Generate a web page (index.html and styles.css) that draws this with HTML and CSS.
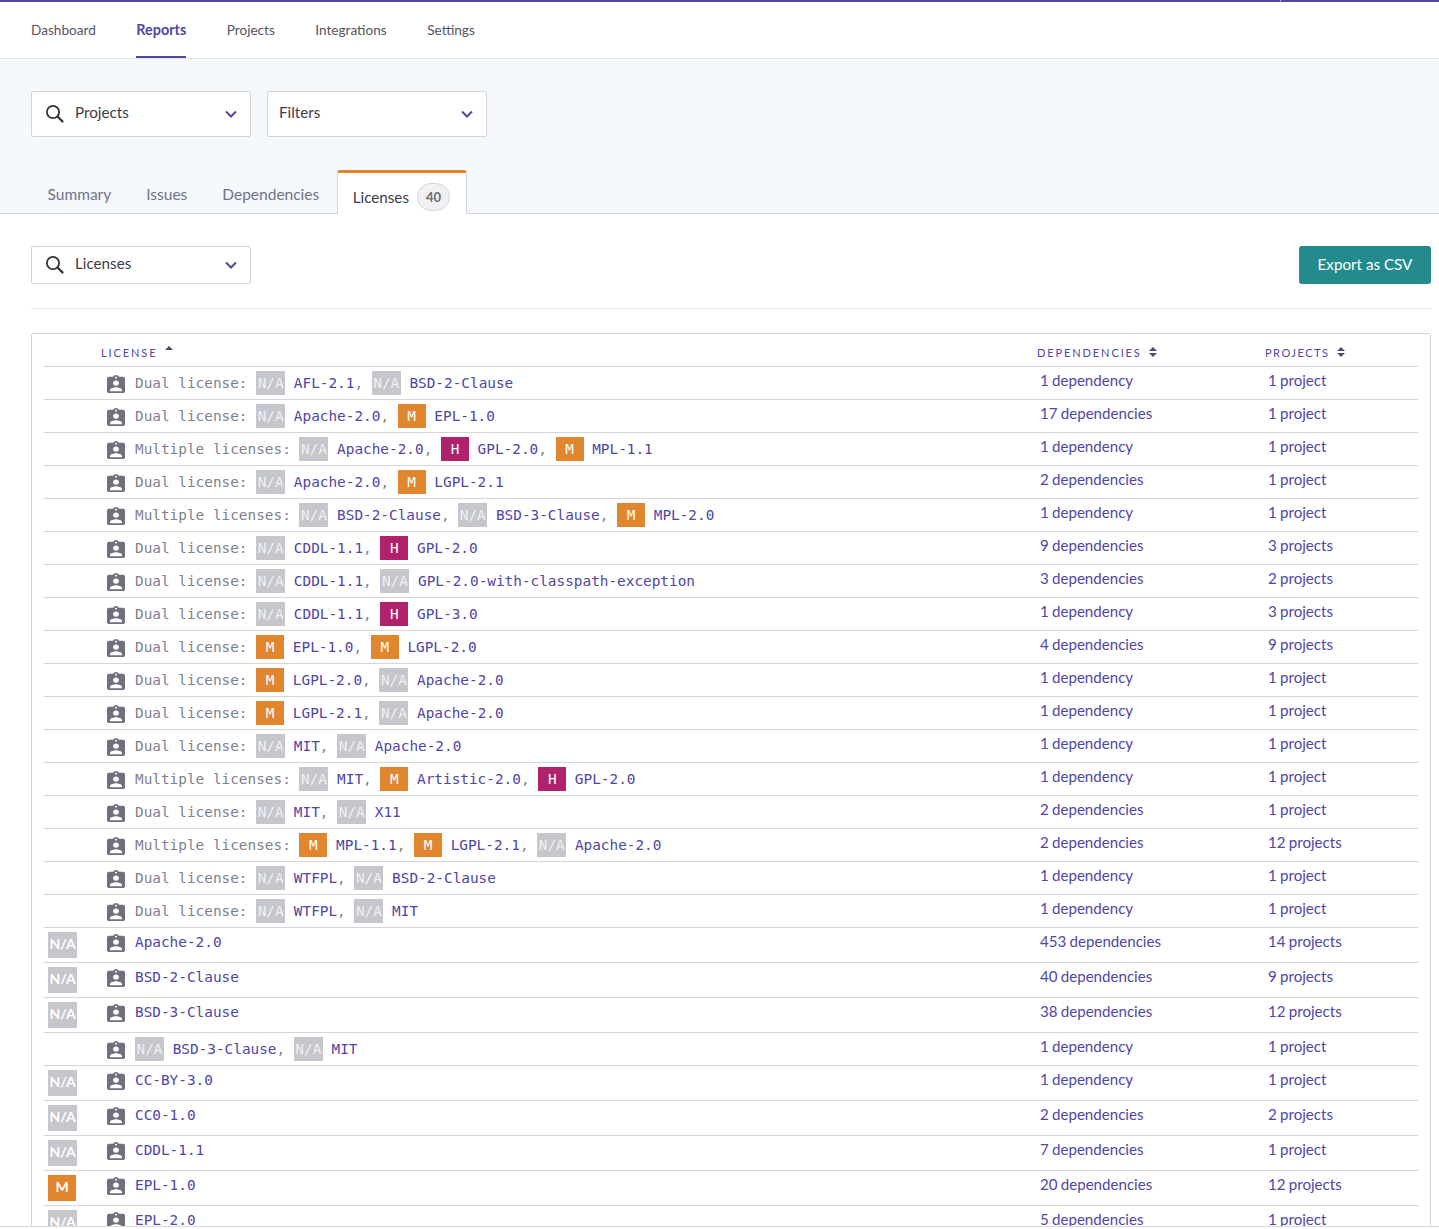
FILE: index.html
```html
<!DOCTYPE html>
<html lang="en">
<head>
    <meta charset="UTF-8">
    <title>Reports - Licenses</title>
    <link rel="stylesheet" href="styles.css">
</head>
<body>
<svg class="defs" width="0" height="0">
    <symbol id="ic-lic" viewBox="3 1 18 20" preserveAspectRatio="none"><path d="M19 3h-4.18C14.4 1.84 13.3 1 12 1c-1.3 0-2.4.84-2.82 2H5c-1.1 0-2 .9-2 2v14c0 1.1.9 2 2 2h14c1.1 0 2-.9 2-2V5c0-1.1-.9-2-2-2zm-7 0c.55 0 1 .45 1 1s-.45 1-1 1-1-.45-1-1 .45-1 1-1zm0 4c1.66 0 3 1.34 3 3s-1.34 3-3 3-3-1.34-3-3 1.34-3 3-3zm6 12H6v-1.4c0-2 4-3.1 6-3.1s6 1.1 6 3.1V19z"/></symbol>
    <symbol id="ic-search" viewBox="1 1 18 18"><circle cx="8" cy="8" r="6.1" fill="none" stroke="currentColor" stroke-width="1.8"/><path d="M12.5 12.5l5.6 5.6" fill="none" stroke="currentColor" stroke-width="2.2"/></symbol>
    <symbol id="ic-chev" viewBox="0 0 12 8"><path d="M1 1.5l5 5 5-5" fill="none" stroke="currentColor" stroke-width="2"/></symbol>
    <symbol id="ic-sort" viewBox="0 0 8 10"><path d="M4 0l4 4H0zM0 6h8l-4 4z"/></symbol>
    <symbol id="ic-up" viewBox="0 0 8 4"><path d="M4 0l4 4H0z"/></symbol>
</svg>
<div class="page">
    <div class="topbar"></div>
    <nav class="nav">
        <a href="#">Dashboard</a>
        <a href="#" class="active">Reports</a>
        <a href="#">Projects</a>
        <a href="#">Integrations</a>
        <a href="#">Settings</a>
    </nav>

    <div class="band">
        <div class="filters">
            <div class="select tall">
                <svg class="search"><use href="#ic-search"/></svg>
                <span class="select-label">Projects</span>
                <svg class="chev"><use href="#ic-chev"/></svg>
            </div>
            <div class="select tall plain">
                <span class="select-label">Filters</span>
                <svg class="chev"><use href="#ic-chev"/></svg>
            </div>
        </div>
        <div class="tabs">
            <a href="#" class="tab">Summary</a>
            <a href="#" class="tab">Issues</a>
            <a href="#" class="tab">Dependencies</a>
            <a href="#" class="tab current">Licenses <span class="count">40</span></a>
        </div>
    </div>

    <div class="content">
        <div class="toolbar">
            <div class="select">
                <svg class="search"><use href="#ic-search"/></svg>
                <span class="select-label">Licenses</span>
                <svg class="chev"><use href="#ic-chev"/></svg>
            </div>
            <button class="export">Export as CSV</button>
        </div>

        <div class="box">
            <div class="head">
                <span></span>
                <span class="th">LICENSE <svg class="sort-up"><use href="#ic-up"/></svg></span>
                <span class="th">DEPENDENCIES <svg class="sort"><use href="#ic-sort"/></svg></span>
                <span class="th">PROJECTS <svg class="sort"><use href="#ic-sort"/></svg></span>
            </div>

            <div class="row"><span></span><div class="lic"><svg class="icon"><use href="#ic-lic"/></svg><div class="combo"><i>Dual license:</i> <b class="na">N/A</b> <a href="#">AFL-2.1</a><i>,</i> <b class="na">N/A</b> <a href="#">BSD-2-Clause</a></div></div><a href="#" class="num">1 dependency</a><a href="#" class="num">1 project</a></div>
            <div class="row"><span></span><div class="lic"><svg class="icon"><use href="#ic-lic"/></svg><div class="combo"><i>Dual license:</i> <b class="na">N/A</b> <a href="#">Apache-2.0</a><i>,</i> <b class="med">M</b> <a href="#">EPL-1.0</a></div></div><a href="#" class="num">17 dependencies</a><a href="#" class="num">1 project</a></div>
            <div class="row"><span></span><div class="lic"><svg class="icon"><use href="#ic-lic"/></svg><div class="combo"><i>Multiple licenses:</i> <b class="na">N/A</b> <a href="#">Apache-2.0</a><i>,</i> <b class="high">H</b> <a href="#">GPL-2.0</a><i>,</i> <b class="med">M</b> <a href="#">MPL-1.1</a></div></div><a href="#" class="num">1 dependency</a><a href="#" class="num">1 project</a></div>
            <div class="row"><span></span><div class="lic"><svg class="icon"><use href="#ic-lic"/></svg><div class="combo"><i>Dual license:</i> <b class="na">N/A</b> <a href="#">Apache-2.0</a><i>,</i> <b class="med">M</b> <a href="#">LGPL-2.1</a></div></div><a href="#" class="num">2 dependencies</a><a href="#" class="num">1 project</a></div>
            <div class="row"><span></span><div class="lic"><svg class="icon"><use href="#ic-lic"/></svg><div class="combo"><i>Multiple licenses:</i> <b class="na">N/A</b> <a href="#">BSD-2-Clause</a><i>,</i> <b class="na">N/A</b> <a href="#">BSD-3-Clause</a><i>,</i> <b class="med">M</b> <a href="#">MPL-2.0</a></div></div><a href="#" class="num">1 dependency</a><a href="#" class="num">1 project</a></div>
            <div class="row"><span></span><div class="lic"><svg class="icon"><use href="#ic-lic"/></svg><div class="combo"><i>Dual license:</i> <b class="na">N/A</b> <a href="#">CDDL-1.1</a><i>,</i> <b class="high">H</b> <a href="#">GPL-2.0</a></div></div><a href="#" class="num">9 dependencies</a><a href="#" class="num">3 projects</a></div>
            <div class="row"><span></span><div class="lic"><svg class="icon"><use href="#ic-lic"/></svg><div class="combo"><i>Dual license:</i> <b class="na">N/A</b> <a href="#">CDDL-1.1</a><i>,</i> <b class="na">N/A</b> <a href="#">GPL-2.0-with-classpath-exception</a></div></div><a href="#" class="num">3 dependencies</a><a href="#" class="num">2 projects</a></div>
            <div class="row"><span></span><div class="lic"><svg class="icon"><use href="#ic-lic"/></svg><div class="combo"><i>Dual license:</i> <b class="na">N/A</b> <a href="#">CDDL-1.1</a><i>,</i> <b class="high">H</b> <a href="#">GPL-3.0</a></div></div><a href="#" class="num">1 dependency</a><a href="#" class="num">3 projects</a></div>
            <div class="row"><span></span><div class="lic"><svg class="icon"><use href="#ic-lic"/></svg><div class="combo"><i>Dual license:</i> <b class="med">M</b> <a href="#">EPL-1.0</a><i>,</i> <b class="med">M</b> <a href="#">LGPL-2.0</a></div></div><a href="#" class="num">4 dependencies</a><a href="#" class="num">9 projects</a></div>
            <div class="row"><span></span><div class="lic"><svg class="icon"><use href="#ic-lic"/></svg><div class="combo"><i>Dual license:</i> <b class="med">M</b> <a href="#">LGPL-2.0</a><i>,</i> <b class="na">N/A</b> <a href="#">Apache-2.0</a></div></div><a href="#" class="num">1 dependency</a><a href="#" class="num">1 project</a></div>
            <div class="row"><span></span><div class="lic"><svg class="icon"><use href="#ic-lic"/></svg><div class="combo"><i>Dual license:</i> <b class="med">M</b> <a href="#">LGPL-2.1</a><i>,</i> <b class="na">N/A</b> <a href="#">Apache-2.0</a></div></div><a href="#" class="num">1 dependency</a><a href="#" class="num">1 project</a></div>
            <div class="row"><span></span><div class="lic"><svg class="icon"><use href="#ic-lic"/></svg><div class="combo"><i>Dual license:</i> <b class="na">N/A</b> <a href="#">MIT</a><i>,</i> <b class="na">N/A</b> <a href="#">Apache-2.0</a></div></div><a href="#" class="num">1 dependency</a><a href="#" class="num">1 project</a></div>
            <div class="row"><span></span><div class="lic"><svg class="icon"><use href="#ic-lic"/></svg><div class="combo"><i>Multiple licenses:</i> <b class="na">N/A</b> <a href="#">MIT</a><i>,</i> <b class="med">M</b> <a href="#">Artistic-2.0</a><i>,</i> <b class="high">H</b> <a href="#">GPL-2.0</a></div></div><a href="#" class="num">1 dependency</a><a href="#" class="num">1 project</a></div>
            <div class="row"><span></span><div class="lic"><svg class="icon"><use href="#ic-lic"/></svg><div class="combo"><i>Dual license:</i> <b class="na">N/A</b> <a href="#">MIT</a><i>,</i> <b class="na">N/A</b> <a href="#">X11</a></div></div><a href="#" class="num">2 dependencies</a><a href="#" class="num">1 project</a></div>
            <div class="row"><span></span><div class="lic"><svg class="icon"><use href="#ic-lic"/></svg><div class="combo"><i>Multiple licenses:</i> <b class="med">M</b> <a href="#">MPL-1.1</a><i>,</i> <b class="med">M</b> <a href="#">LGPL-2.1</a><i>,</i> <b class="na">N/A</b> <a href="#">Apache-2.0</a></div></div><a href="#" class="num">2 dependencies</a><a href="#" class="num">12 projects</a></div>
            <div class="row"><span></span><div class="lic"><svg class="icon"><use href="#ic-lic"/></svg><div class="combo"><i>Dual license:</i> <b class="na">N/A</b> <a href="#">WTFPL</a><i>,</i> <b class="na">N/A</b> <a href="#">BSD-2-Clause</a></div></div><a href="#" class="num">1 dependency</a><a href="#" class="num">1 project</a></div>
            <div class="row"><span></span><div class="lic"><svg class="icon"><use href="#ic-lic"/></svg><div class="combo"><i>Dual license:</i> <b class="na">N/A</b> <a href="#">WTFPL</a><i>,</i> <b class="na">N/A</b> <a href="#">MIT</a></div></div><a href="#" class="num">1 dependency</a><a href="#" class="num">1 project</a></div>

            <div class="row"><span class="sev na">N/A</span><div class="lic"><svg class="icon"><use href="#ic-lic"/></svg><a href="#" class="single">Apache-2.0</a></div><a href="#" class="num">453 dependencies</a><a href="#" class="num">14 projects</a></div>
            <div class="row"><span class="sev na">N/A</span><div class="lic"><svg class="icon"><use href="#ic-lic"/></svg><a href="#" class="single">BSD-2-Clause</a></div><a href="#" class="num">40 dependencies</a><a href="#" class="num">9 projects</a></div>
            <div class="row"><span class="sev na">N/A</span><div class="lic"><svg class="icon"><use href="#ic-lic"/></svg><a href="#" class="single">BSD-3-Clause</a></div><a href="#" class="num">38 dependencies</a><a href="#" class="num">12 projects</a></div>
            <div class="row"><span></span><div class="lic"><svg class="icon"><use href="#ic-lic"/></svg><div class="combo"><b class="na">N/A</b> <a href="#">BSD-3-Clause</a><i>,</i> <b class="na">N/A</b> <a href="#">MIT</a></div></div><a href="#" class="num">1 dependency</a><a href="#" class="num">1 project</a></div>
            <div class="row"><span class="sev na">N/A</span><div class="lic"><svg class="icon"><use href="#ic-lic"/></svg><a href="#" class="single">CC-BY-3.0</a></div><a href="#" class="num">1 dependency</a><a href="#" class="num">1 project</a></div>
            <div class="row"><span class="sev na">N/A</span><div class="lic"><svg class="icon"><use href="#ic-lic"/></svg><a href="#" class="single">CC0-1.0</a></div><a href="#" class="num">2 dependencies</a><a href="#" class="num">2 projects</a></div>
            <div class="row"><span class="sev na">N/A</span><div class="lic"><svg class="icon"><use href="#ic-lic"/></svg><a href="#" class="single">CDDL-1.1</a></div><a href="#" class="num">7 dependencies</a><a href="#" class="num">1 project</a></div>
            <div class="row"><span class="sev med">M</span><div class="lic"><svg class="icon"><use href="#ic-lic"/></svg><a href="#" class="single">EPL-1.0</a></div><a href="#" class="num">20 dependencies</a><a href="#" class="num">12 projects</a></div>
            <div class="row"><span class="sev na">N/A</span><div class="lic"><svg class="icon"><use href="#ic-lic"/></svg><a href="#" class="single">EPL-2.0</a></div><a href="#" class="num">5 dependencies</a><a href="#" class="num">1 project</a></div>
        </div>
    </div>
</div>
</body>
</html>
```

FILE: styles.css
```css
html, body {
    margin: 0;
    padding: 0;
    height: 100%;
    overflow: hidden;
    background-color: #fff;
}
body {
    font-family: Lato, "Open Sans", sans-serif;
    color: #3c3c46;
}
a {
    text-decoration: none;
    color: inherit;
}
.defs {
    position: absolute;
}
.page {
    box-sizing: border-box;
    height: 1227px;
    overflow: hidden;
    border-bottom: 1px solid #dcdce0;
}
.topbar {
    position: relative;
    height: 2px;
    background-color: #4f46a5;
}
.topbar::after {
    content: "";
    position: absolute;
    left: 1280px;
    top: 0;
    width: 1px;
    height: 2px;
    background-color: #a5a3cc;
}

/* top navigation */
.nav {
    display: flex;
    gap: 40.5px;
    height: 56px;
    padding-left: 31px;
    border-bottom: 1px solid #e3e5ea;
    font-size: 13.6px;
}
.nav a {
    box-sizing: border-box;
    height: 56px;
    line-height: 56px;
    color: #55555f;
}
.nav a.active {
    color: #4f46a5;
    font-size: 14.4px;
    font-weight: 700;
    border-bottom: 2px solid #4f46a5;
}

/* filters and tabs */
.band {
    height: 154px;
    background-color: #f6f9fc;
    border-bottom: 1px solid #d4d5db;
}
.filters {
    display: flex;
    gap: 16px;
    padding: 32px 0 0 31px;
}
.select {
    box-sizing: border-box;
    display: flex;
    align-items: center;
    width: 220px;
    height: 38px;
    padding: 0 13px 0 14px;
    background-color: #fff;
    border: 1px solid #d4d5db;
    border-radius: 2px;
    color: #3c3c46;
}
.select.tall {
    height: 46px;
}
.select.plain {
    padding-left: 11px;
}
.select-label {
    flex: 1;
    padding-bottom: 5px;
    font-size: 15.2px;
}
.search {
    width: 18px;
    height: 18px;
    margin-right: 11px;
    color: #33333b;
}
.chev {
    width: 12px;
    height: 8px;
    color: #4f46a5;
}
.tabs {
    display: flex;
    align-items: flex-end;
    height: 44px;
    margin-top: 33px;
    padding-left: 30px;
}
.tab {
    padding: 0 17.5px 9px;
    font-size: 15.5px;
    line-height: 22px;
    color: #72728a;
}
.tab.current {
    box-sizing: border-box;
    display: flex;
    align-items: center;
    gap: 8px;
    width: 130px;
    height: 44px;
    padding: 6px 15px 0;
    font-size: 15.2px;
    color: #3c3c46;
    background-color: #fff;
    border: 1px solid #d4d5db;
    border-top: 3px solid #e0862f;
    border-bottom: 0;
    border-radius: 3px 3px 0 0;
}
.count {
    box-sizing: border-box;
    width: 33px;
    height: 28px;
    line-height: 26px;
    text-align: center;
    font-size: 13px;
    font-weight: 700;
    color: #6a6a78;
    background-color: #f1f1f4;
    border: 1px solid #d4d5db;
    border-radius: 14px;
}

/* licenses table */
.content {
    margin: 0 8px 0 31px;
    padding-top: 32px;
}
.toolbar {
    display: flex;
    justify-content: space-between;
    padding-bottom: 24px;
    border-bottom: 1px solid #e6e6ea;
}
.export {
    width: 132px;
    height: 38px;
    padding: 0 0 2px;
    color: #fff;
    background-color: #238b8b;
    border: 0;
    border-radius: 3px;
    font-family: inherit;
    font-size: 15.2px;
}
.box {
    margin-top: 24px;
    padding: 0 12px;
    border: 1px solid #d4d5db;
    border-radius: 2px;
}
.head, .row {
    display: grid;
    grid-template-columns: 63px 933px 228px 1fr;
    border-bottom: 1px solid #d4d5db;
}
.head {
    grid-template-columns: 57px 936px 228px 1fr;
    height: 32px;
    align-items: center;
}
.th {
    padding-top: 4px;
    font-size: 11px;
    letter-spacing: 1.9px;
    color: #4f46a5;
}
.th:last-child {
    letter-spacing: 1.5px;
}
.sort {
    width: 8px;
    height: 10px;
    margin-left: 3px;
    fill: #4a4a78;
}
.sort-up {
    width: 8px;
    height: 4px;
    margin: 0 0 7px 3px;
    fill: #4a4a78;
}
.row {
    align-items: start;
}
.lic {
    display: flex;
    align-items: center;
    gap: 10px;
}
.icon {
    width: 18px;
    height: 18px;
    margin-top: 2px;
    flex: none;
    fill: #6f6f7e;
}
.combo, .single {
    font-family: "DejaVu Sans Mono", monospace;
    font-size: 14.38px;
    line-height: 24px;
    color: #4f46a5;
}
.combo {
    padding: 4px 0;
}
.single {
    padding: 2px 0;
}
.combo i {
    font-style: normal;
    color: #7f7f8e;
}
.combo b {
    display: inline-block;
    height: 24px;
    vertical-align: top;
    font-weight: 400;
    text-align: center;
    color: #fff;
}
.combo b.na {
    width: 29px;
    color: #f0f0f3;
    background-color: #c6c6cd;
}
.combo b.med {
    width: 28px;
    background-color: #df862e;
}
.combo b.high {
    width: 28px;
    background-color: #b0226b;
}
.sev {
    width: 29px;
    height: 26px;
    margin: 4px 0 4px 4px;
    line-height: 24px;
    text-align: center;
    font-size: 14px;
    font-weight: 700;
    color: #fff;
}
.sev.na {
    background-color: #c6c6cd;
}
.sev.med {
    width: 28px;
    background-color: #df862e;
}
.num {
    padding-top: 1px;
    font-size: 15.1px;
    word-spacing: -0.6px;
    line-height: 24px;
    color: #4f46a5;
}
```
